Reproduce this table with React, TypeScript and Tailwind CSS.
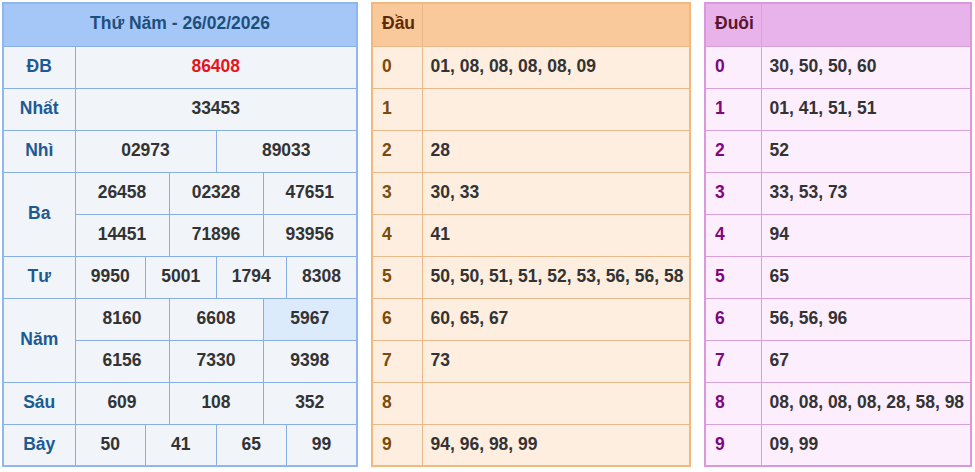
import React from "react";

const font = { fontFamily: '"Liberation Sans", Arial, sans-serif' };

type Cell = { v: string; span: number; hl?: boolean; red?: boolean };
type Row = { label?: string; labelRows?: number; cells: Cell[] };

const rows: Row[] = [
  { label: "ĐB", cells: [{ v: "86408", span: 12, red: true }] },
  { label: "Nhất", cells: [{ v: "33453", span: 12 }] },
  { label: "Nhì", cells: [{ v: "02973", span: 6 }, { v: "89033", span: 6 }] },
  { label: "Ba", labelRows: 2, cells: [{ v: "26458", span: 4 }, { v: "02328", span: 4 }, { v: "47651", span: 4 }] },
  { cells: [{ v: "14451", span: 4 }, { v: "71896", span: 4 }, { v: "93956", span: 4 }] },
  { label: "Tư", cells: [{ v: "9950", span: 3 }, { v: "5001", span: 3 }, { v: "1794", span: 3 }, { v: "8308", span: 3 }] },
  { label: "Năm", labelRows: 2, cells: [{ v: "8160", span: 4 }, { v: "6608", span: 4 }, { v: "5967", span: 4, hl: true }] },
  { cells: [{ v: "6156", span: 4 }, { v: "7330", span: 4 }, { v: "9398", span: 4 }] },
  { label: "Sáu", cells: [{ v: "609", span: 4 }, { v: "108", span: 4 }, { v: "352", span: 4 }] },
  { label: "Bảy", cells: [{ v: "50", span: 3 }, { v: "41", span: 3 }, { v: "65", span: 3 }, { v: "99", span: 3 }] },
];

const dau = [
  "01, 08, 08, 08, 08, 09",
  "",
  "28",
  "30, 33",
  "41",
  "50, 50, 51, 51, 52, 53, 56, 56, 58",
  "60, 65, 67",
  "73",
  "",
  "94, 96, 98, 99",
];

const duoi = [
  "30, 50, 50, 60",
  "01, 41, 51, 51",
  "52",
  "33, 53, 73",
  "94",
  "65",
  "56, 56, 96",
  "67",
  "08, 08, 08, 08, 28, 58, 98",
  "09, 99",
];

function MainTable() {
  return (
    <table className="w-[356px] table-fixed border-collapse border-2 border-[#90b6ee] text-[17.5px] font-bold">
      <colgroup>
        <col className="w-[72px]" />
        {Array.from({ length: 12 }).map((_, i) => (
          <col key={i} />
        ))}
      </colgroup>
      <thead>
        <tr className="h-[43px] bg-[#a5c7f8]">
          <th colSpan={13} className="border border-[#88aee6] pb-[3px] text-center text-[#1d4f7c]">
            Thứ Năm - 26/02/2026
          </th>
        </tr>
      </thead>
      <tbody>
        {rows.map((r, i) => (
          <tr key={i} className="h-[42px]">
            {r.label && (
              <td
                rowSpan={r.labelRows || 1}
                className="border border-[#88aee6] bg-[#f1f4f9] pb-[2px] text-center text-[#1d5a93]"
              >
                {r.label}
              </td>
            )}
            {r.cells.map((c, j) => (
              <td
                key={j}
                colSpan={c.span}
                className={`border border-[#88aee6] pb-[2px] text-center ${c.hl ? "bg-[#dcebfb]" : "bg-[#f1f4f9]"} ${c.red ? "text-[#e8141b]" : "text-[#333333]"}`}
              >
                {c.v}
              </td>
            ))}
          </tr>
        ))}
      </tbody>
    </table>
  );
}

function SideTable({
  title,
  data,
  width,
  labelW,
  outer,
  inner,
  headBg,
  bodyBg,
  headText,
  labelText,
}: {
  title: string;
  data: string[];
  width: string;
  labelW: string;
  outer: string;
  inner: string;
  headBg: string;
  bodyBg: string;
  headText: string;
  labelText: string;
}) {
  return (
    <table className={`${width} table-fixed border-collapse border-2 ${outer} text-[17.5px] font-bold`}>
      <colgroup>
        <col className={labelW} />
        <col />
      </colgroup>
      <thead>
        <tr className={`h-[43px] ${headBg}`}>
          <th className={`border ${inner} pb-[3px] pl-[9px] text-left ${headText}`}>{title}</th>
          <th className={`border ${inner}`}></th>
        </tr>
      </thead>
      <tbody>
        {data.map((d, i) => (
          <tr key={i} className={`h-[42px] ${bodyBg}`}>
            <td className={`border ${inner} pb-[2px] pl-[9px] text-left ${labelText}`}>{i}</td>
            <td className={`border ${inner} pb-[2px] pl-[8px] text-left text-[#333333] whitespace-nowrap`}>{d}</td>
          </tr>
        ))}
      </tbody>
    </table>
  );
}

export default function App() {
  return (
    <div className="w-[975px] h-[472px] bg-white" style={font}>
      <div className="flex items-start gap-[13px] pl-[2px] pt-[2px]">
        <MainTable />
        <SideTable
          title="Đầu"
          data={dau}
          width="w-[320px]"
          labelW="w-[50px]"
          outer="border-[#f2b97f]"
          inner="border-[#eab98a]"
          headBg="bg-[#f9c99c]"
          bodyBg="bg-[#fdeee0]"
          headText="text-[#5c2a05]"
          labelText="text-[#7b4b0c]"
        />
        <SideTable
          title="Đuôi"
          data={duoi}
          width="w-[268px]"
          labelW="w-[56px]"
          outer="border-[#dc98dc]"
          inner="border-[#d8a2d8]"
          headBg="bg-[#e8b3ea]"
          bodyBg="bg-[#fdeefd]"
          headText="text-[#5a1630]"
          labelText="text-[#7f067f]"
        />
      </div>
    </div>
  );
}
